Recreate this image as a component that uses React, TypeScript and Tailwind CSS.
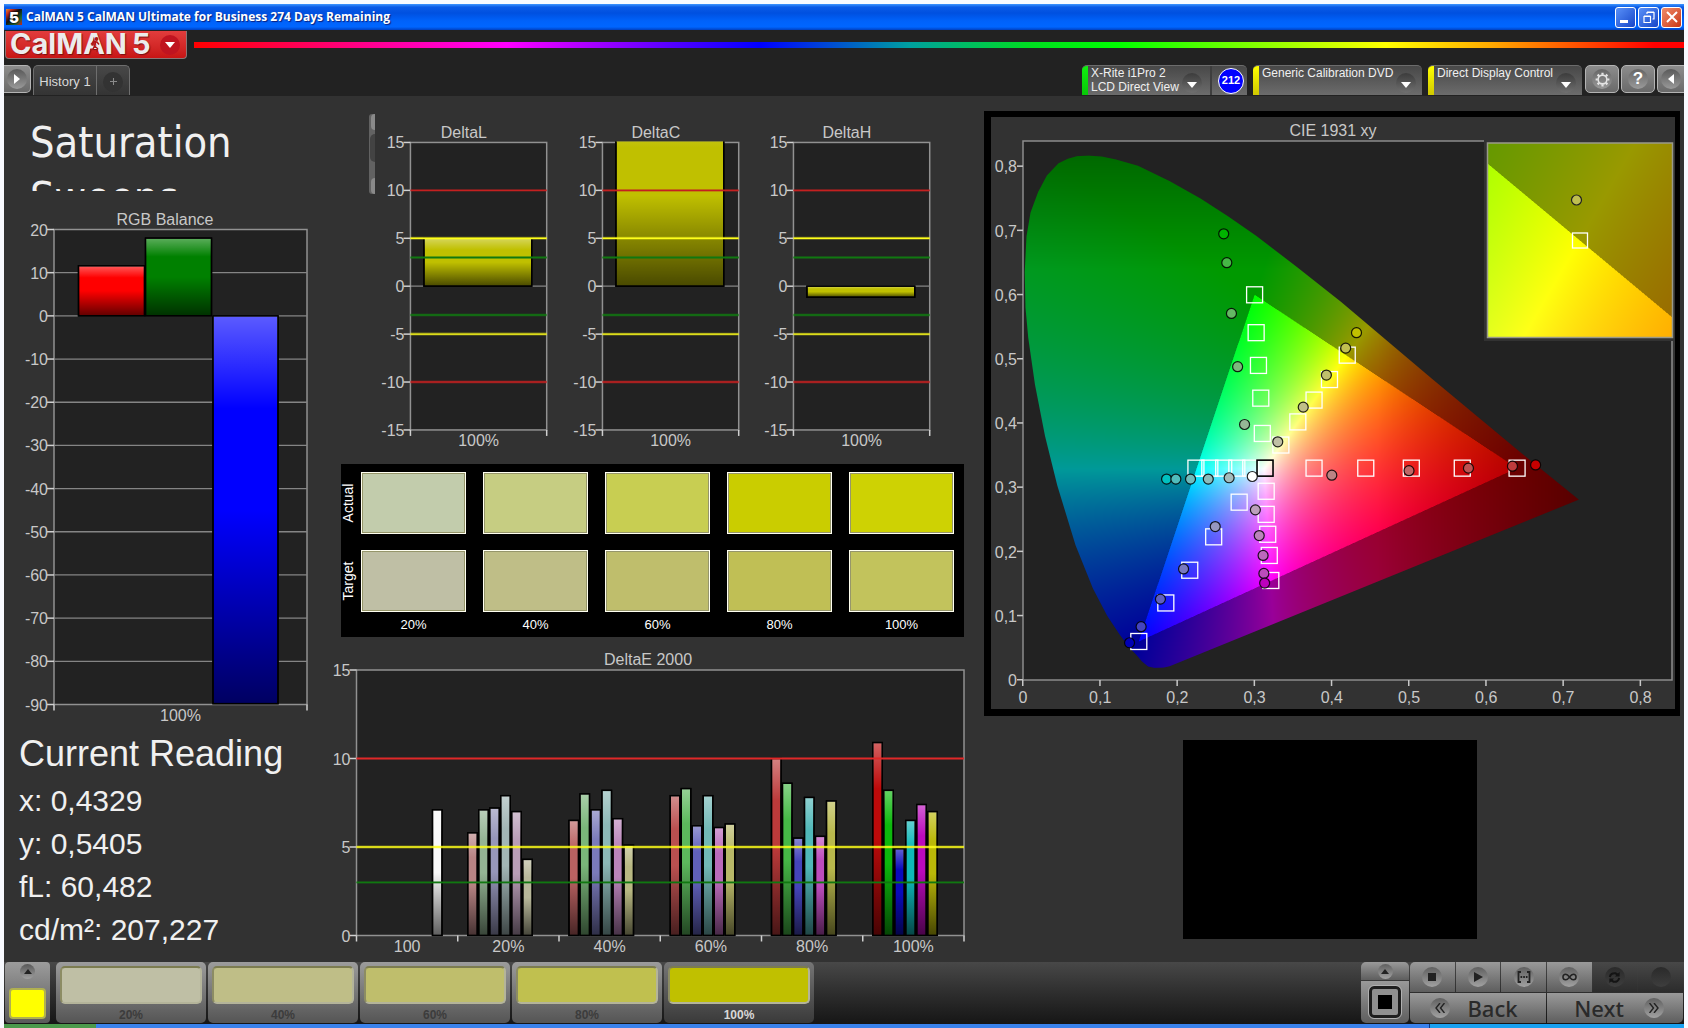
import { useEffect, useRef } from "react";
import type { ReactNode } from "react";

type Point = { x: number; y: number; fill?: string };
type Bar = { x: number; width: number; value: number; color: string };
type Limit = { value: number; color: string };
type Plot = { left: number; right: number; top: number; bottom: number };

const DELTA_LIMITS: Limit[] = [
  { value: 10, color: "#c42020" },
  { value: 5, color: "#ffff1a" },
  { value: 3, color: "#107810" },
  { value: -3, color: "#107810" },
  { value: -5, color: "#ffff1a" },
  { value: -10, color: "#c42020" },
];

const DELTA_CHARTS = [
  { title: "DeltaL", value: 5 },
  { title: "DeltaC", value: 19 },
  { title: "DeltaH", value: -1.15 },
];

const SWATCHES = [
  { label: "20%", actual: "#c2ccac", target: "#bfbfa5" },
  { label: "40%", actual: "#c6cd82", target: "#bfbe87" },
  { label: "60%", actual: "#c8ce52", target: "#bfbe6c" },
  { label: "80%", actual: "#cacd00", target: "#c0bf55" },
  { label: "100%", actual: "#ced203", target: "#c2c35c" },
];

const STEPS = [
  { label: "20%", color: "#bfbfa5" },
  { label: "40%", color: "#bfbe87" },
  { label: "60%", color: "#bfbe6c" },
  { label: "80%", color: "#c0c04f" },
  { label: "100%", color: "#c0c000" },
];

const READINGS = ["x: 0,4329", "y: 0,5405", "fL: 60,482", "cd/m²: 207,227"];

// seven slots per group: R G B C M Y W
const DELTA_E = [
  {
    label: "100",
    values: [0, 0, 0, 0, 0, 0, 7.1],
    colors: ["", "", "", "", "", "", "#f8f8f8"],
  },
  {
    label: "20%",
    values: [5.8, 7.1, 7.2, 7.9, 7, 4.3],
    colors: ["#b88484", "#94b494", "#9696ba", "#a2b6b6", "#b89cb6", "#b8b89a"],
  },
  {
    label: "40%",
    values: [6.5, 8, 7.1, 8.2, 6.6, 5.1],
    colors: ["#ba6262", "#7ab67a", "#7a7aba", "#8cb8b6", "#ba84ba", "#b8b882"],
  },
  {
    label: "60%",
    values: [7.9, 8.3, 6.2, 7.9, 6.1, 6.3],
    colors: ["#ba5050", "#5cb85c", "#6060ba", "#72b8b6", "#ba6aba", "#b8b868"],
  },
  {
    label: "80%",
    values: [10, 8.6, 5.5, 7.8, 5.6, 7.6],
    colors: ["#bc3a3a", "#46b846", "#4444ba", "#50b8b8", "#bc4cbc", "#b8b84c"],
  },
  {
    label: "100%",
    values: [10.9, 8.2, 4.9, 6.5, 7.4, 7],
    colors: ["#bc0a0a", "#0cb80c", "#0a0abc", "#0eb8b8", "#bc0abc", "#bab808"],
  },
];

const TARGETS: Point[] = [
  { x: 0.3, y: 0.6 },
  { x: 0.302, y: 0.541 },
  { x: 0.305, y: 0.49 },
  { x: 0.308, y: 0.439 },
  { x: 0.31, y: 0.384 },
  { x: 0.42, y: 0.506 },
  { x: 0.397, y: 0.468 },
  { x: 0.377, y: 0.436 },
  { x: 0.356, y: 0.402 },
  { x: 0.334, y: 0.366 },
  { x: 0.224, y: 0.33 },
  { x: 0.242, y: 0.33 },
  { x: 0.26, y: 0.33 },
  { x: 0.277, y: 0.33 },
  { x: 0.295, y: 0.33 },
  { x: 0.377, y: 0.33 },
  { x: 0.444, y: 0.33 },
  { x: 0.503, y: 0.33 },
  { x: 0.569, y: 0.33 },
  { x: 0.64, y: 0.33 },
  { x: 0.28, y: 0.277 },
  { x: 0.247, y: 0.223 },
  { x: 0.216, y: 0.171 },
  { x: 0.185, y: 0.12 },
  { x: 0.15, y: 0.06 },
  { x: 0.315, y: 0.294 },
  { x: 0.315, y: 0.258 },
  { x: 0.317, y: 0.227 },
  { x: 0.319, y: 0.194 },
  { x: 0.321, y: 0.155 },
];

const READS: Point[] = [
  { x: 0.26, y: 0.695, fill: "#00b400" },
  { x: 0.264, y: 0.65, fill: "#46b846" },
  { x: 0.27, y: 0.571, fill: "#64b864" },
  { x: 0.278, y: 0.488, fill: "#7cb87c" },
  { x: 0.287, y: 0.398, fill: "#96b896" },
  { x: 0.432, y: 0.541, fill: "#c0c000" },
  { x: 0.418, y: 0.517, fill: "#c0c050" },
  { x: 0.393, y: 0.475, fill: "#c0c06c" },
  { x: 0.363, y: 0.425, fill: "#c0c087" },
  { x: 0.33, y: 0.371, fill: "#c0c0a5" },
  { x: 0.186, y: 0.313, fill: "#00c0c0" },
  { x: 0.198, y: 0.313, fill: "#50bcbc" },
  { x: 0.217, y: 0.313, fill: "#70bcbc" },
  { x: 0.24, y: 0.313, fill: "#8cbcbc" },
  { x: 0.267, y: 0.315, fill: "#a4bcbc" },
  { x: 0.297, y: 0.317, fill: "#ffffff" },
  { x: 0.4, y: 0.319, fill: "#bc8484" },
  { x: 0.5, y: 0.326, fill: "#c06666" },
  { x: 0.577, y: 0.33, fill: "#c05050" },
  { x: 0.634, y: 0.333, fill: "#c03c3c" },
  { x: 0.664, y: 0.335, fill: "#c80000" },
  { x: 0.249, y: 0.239, fill: "#9696c0" },
  { x: 0.208, y: 0.173, fill: "#7878c0" },
  { x: 0.178, y: 0.126, fill: "#6060c0" },
  { x: 0.153, y: 0.083, fill: "#4444c0" },
  { x: 0.138, y: 0.058, fill: "#0000b4" },
  { x: 0.301, y: 0.265, fill: "#bca0bc" },
  { x: 0.306, y: 0.225, fill: "#bc84bc" },
  { x: 0.311, y: 0.194, fill: "#bc68bc" },
  { x: 0.312, y: 0.166, fill: "#bc4cbc" },
  { x: 0.313, y: 0.151, fill: "#bc00bc" },
];

// spectral locus from 640 nm round to the violet end
const LOCUS: [number, number][] = [
  [0.72, 0.281],
  [0.646, 0.353],
  [0.529, 0.47],
  [0.412, 0.589],
  [0.354, 0.644],
  [0.302, 0.692],
  [0.266, 0.722],
  [0.23, 0.75],
  [0.19, 0.777],
  [0.149, 0.801],
  [0.12, 0.811],
  [0.102, 0.8155],
  [0.085, 0.8167],
  [0.07, 0.816],
  [0.058, 0.812],
  [0.046, 0.805],
  [0.031, 0.786],
  [0.0195, 0.76],
  [0.0097, 0.728],
  [0.0045, 0.691],
  [0.0022, 0.635],
  [0.0032, 0.58],
  [0.0068, 0.533],
  [0.0155, 0.46],
  [0.0285, 0.38],
  [0.0444, 0.303],
  [0.068, 0.21],
  [0.0905, 0.1427],
  [0.109, 0.1],
  [0.125, 0.071],
  [0.138, 0.05],
  [0.147, 0.039],
  [0.154, 0.029],
  [0.162, 0.021],
  [0.17, 0.0188],
  [0.182, 0.0192],
  [0.19, 0.0215],
];

const RED = [0.64, 0.33];
const GREEN = [0.3, 0.6];
const BLUE = [0.15, 0.06];

function side(a: number[], b: number[], x: number, y: number) {
  return (b[0] - a[0]) * (y - a[1]) - (b[1] - a[1]) * (x - a[0]);
}

function chromaColor(x: number, y: number): [number, number, number] {
  const z = 1 - x - y;
  const r = Math.max(0, 3.2406 * x - 1.5372 * y - 0.4986 * z);
  const g = Math.max(0, -0.9689 * x + 1.8758 * y + 0.0415 * z);
  const b = Math.max(0, 0.0557 * x - 0.204 * y + 1.057 * z);
  const inside =
    side(RED, GREEN, x, y) >= 0 &&
    side(GREEN, BLUE, x, y) >= 0 &&
    side(BLUE, RED, x, y) >= 0;
  let level = inside ? 1 : 0.6;
  if (x > 0.46) level *= 1 - (x - 0.46) * 1.65;
  if (y > 0.64) level *= 1 - (y - 0.64) * 1.8;
  const scale = (255 * level) / Math.max(r, g, b);
  return [r * scale, g * scale, b * scale];
}

function ChromaCanvas({
  x0,
  x1,
  y0,
  y1,
  width,
  height,
  clip,
}: {
  x0: number;
  x1: number;
  y0: number;
  y1: number;
  width: number;
  height: number;
  clip?: boolean;
}) {
  const ref = useRef<HTMLCanvasElement>(null);
  const w = width * 2;
  const h = height * 2;

  useEffect(() => {
    const ctx = ref.current?.getContext("2d");
    if (!ctx) return;
    const img = ctx.createImageData(w, h);
    for (let j = 0; j < h; j++) {
      for (let i = 0; i < w; i++) {
        const x = x0 + ((i + 0.5) / w) * (x1 - x0);
        const y = y1 - ((j + 0.5) / h) * (y1 - y0);
        const [r, g, b] = chromaColor(x, y);
        const k = (j * w + i) * 4;
        img.data[k] = r;
        img.data[k + 1] = g;
        img.data[k + 2] = b;
        img.data[k + 3] = 255;
      }
    }
    ctx.putImageData(img, 0, 0);
    if (!clip) return;
    ctx.globalCompositeOperation = "destination-in";
    ctx.beginPath();
    LOCUS.forEach(([x, y]) =>
      ctx.lineTo(((x - x0) / (x1 - x0)) * w, ((y1 - y) / (y1 - y0)) * h),
    );
    ctx.closePath();
    ctx.fill();
    ctx.globalCompositeOperation = "source-over";
  }, [x0, x1, y0, y1, w, h, clip]);

  return <canvas ref={ref} width={w} height={h} className="block h-full w-full" />;
}

function BarChart({
  id,
  title,
  titleX,
  width,
  height,
  plot,
  min,
  max,
  step,
  grid,
  bars,
  limits = [],
  groups,
}: {
  id: string;
  title: string;
  titleX: number;
  width: number;
  height: number;
  plot: Plot;
  min: number;
  max: number;
  step: number;
  grid: number[];
  bars: Bar[];
  limits?: Limit[];
  groups: string[];
}) {
  const yOf = (v: number) =>
    plot.top + ((max - v) / (max - min)) * (plot.bottom - plot.top);
  const ticks: number[] = [];
  for (let v = max; v >= min; v -= step) ticks.push(v);
  const plotWidth = plot.right - plot.left;
  const groupWidth = plotWidth / groups.length;

  return (
    <svg
      viewBox={`0 0 ${width} ${height}`}
      role="img"
      aria-label={title}
      className="block w-full overflow-visible font-['Liberation_Sans',Arial,sans-serif] text-[16px]"
    >
      <defs>
        <linearGradient id={`${id}-shade`} x1="0" y1="0" x2="0" y2="1">
          <stop offset="0" stopColor="#fff" stopOpacity="0.36" />
          <stop offset="0.24" stopColor="#fff" stopOpacity="0" />
          <stop offset="0.5" stopColor="#000" stopOpacity="0" />
          <stop offset="1" stopColor="#000" stopOpacity="0.62" />
        </linearGradient>
        <clipPath id={`${id}-clip`}>
          <rect
            x={plot.left}
            y={plot.top - 1}
            width={plotWidth}
            height={plot.bottom - plot.top + 2}
          />
        </clipPath>
      </defs>
      <text x={titleX} y="17" textAnchor="middle" fill="#c8c8c8">
        {title}
      </text>
      <rect
        x={plot.left}
        y={plot.top}
        width={plotWidth}
        height={plot.bottom - plot.top}
        fill="#222"
        stroke="#919191"
        strokeWidth="1.5"
      />
      {grid.map((v) => (
        <line
          key={v}
          x1={plot.left}
          x2={plot.right}
          y1={yOf(v)}
          y2={yOf(v)}
          stroke="#858585"
          strokeWidth="1.3"
        />
      ))}
      {ticks.map((v) => (
        <g key={v}>
          <line
            x1={plot.left - 7}
            x2={plot.left}
            y1={yOf(v)}
            y2={yOf(v)}
            stroke="#d0d0d0"
            strokeWidth="1.5"
          />
          <text
            x={plot.left - 6}
            y={yOf(v) + 6}
            textAnchor="end"
            fill="#c8c8c8"
          >
            {v}
          </text>
        </g>
      ))}
      <g clipPath={`url(#${id}-clip)`}>
        {bars.map((b, i) => {
          const y = yOf(Math.max(b.value, 0));
          const h = Math.abs(yOf(b.value) - yOf(0));
          return (
            <g key={i} stroke="#000" strokeWidth="1.4">
              <rect x={b.x} y={y} width={b.width} height={h} fill={b.color} />
              <rect
                x={b.x}
                y={y}
                width={b.width}
                height={h}
                fill={`url(#${id}-shade)`}
              />
            </g>
          );
        })}
      </g>
      {limits.map((l) => (
        <g key={l.value} stroke={l.color}>
          <line
            x1={plot.left}
            x2={plot.right}
            y1={yOf(l.value)}
            y2={yOf(l.value)}
            strokeWidth="3"
            strokeOpacity="0.35"
          />
          <line
            x1={plot.left}
            x2={plot.right}
            y1={yOf(l.value)}
            y2={yOf(l.value)}
            strokeWidth="1.4"
          />
        </g>
      ))}
      {[...groups, ""].map((_, i) => (
        <line
          key={i}
          x1={plot.left + i * groupWidth}
          x2={plot.left + i * groupWidth}
          y1={plot.bottom}
          y2={plot.bottom + 6}
          stroke="#d0d0d0"
          strokeWidth="1.5"
        />
      ))}
      {groups.map((g, i) => (
        <text
          key={g}
          x={plot.left + (i + 0.5) * groupWidth}
          y={plot.bottom + 16}
          textAnchor="middle"
          fill="#c8c8c8"
        >
          {g}
        </text>
      ))}
    </svg>
  );
}

function CieChart() {
  const left = 32;
  const top = 24;
  const w = 650;
  const h = 539;
  const perX = 772;
  const perY = 642;
  const px = (x: number) => left + x * perX;
  const py = (y: number) => top + h - y * perY;
  const ticks = [0, 1, 2, 3, 4, 5, 6, 7, 8];
  const name = (t: number) => (t === 0 ? "0" : `0,${t}`);

  return (
    <svg
      viewBox="0 0 684 592"
      role="img"
      aria-label="CIE 1931 xy"
      className="block w-full font-['Liberation_Sans',Arial,sans-serif] text-[16px]"
    >
      <text x="342" y="19" textAnchor="middle" fill="#c8c8c8">
        CIE 1931 xy
      </text>
      <rect
        x={left}
        y={top}
        width={w - 1}
        height={h}
        fill="#222"
        stroke="#8c8c8c"
        strokeWidth="1.5"
      />
      {ticks.map((t) => (
        <g key={t} fill="#c8c8c8" stroke="none">
          <rect x={left - 6} y={py(t / 10) - 1} width="6" height="1.5" />
          <rect x={px(t / 10) - 1} y={top + h} width="1.5" height="6" />
          <text x={left - 6} y={py(t / 10) + 6} textAnchor="end">
            {name(t)}
          </text>
          <text x={px(t / 10)} y={top + h + 23} textAnchor="middle">
            {name(t)}
          </text>
        </g>
      ))}
      <foreignObject x={left} y={top} width={w} height={h}>
        <ChromaCanvas
          x0={0}
          x1={w / perX}
          y0={0}
          y1={h / perY}
          width={w}
          height={h}
          clip
        />
      </foreignObject>
      <g fill="none" stroke="#fff" strokeWidth="1.3">
        {TARGETS.map((p, i) => (
          <rect key={i} x={px(p.x) - 8} y={py(p.y) - 8} width="16" height="16" />
        ))}
      </g>
      <rect
        x={px(0.3135) - 8}
        y={py(0.33) - 8}
        width="16"
        height="16"
        fill="none"
        stroke="#000"
        strokeWidth="1.6"
      />
      <g stroke="#000" strokeOpacity="0.85" strokeWidth="1.2">
        {READS.map((p, i) => (
          <circle key={i} cx={px(p.x)} cy={py(p.y)} r="5" fill={p.fill} />
        ))}
      </g>
      <rect x="493" y="22" width="191" height="202" fill="#323232" />
      <foreignObject x="496" y="26" width="185" height="194">
        <ChromaCanvas
          x0={0.3913}
          x1={0.4473}
          y0={0.4773}
          y1={0.5333}
          width={185}
          height={194}
        />
      </foreignObject>
      <rect
        x="496.5"
        y="26"
        width="185"
        height="194.5"
        fill="none"
        stroke="#9a9a8a"
        strokeWidth="1.5"
      />
      <rect
        x="581.5"
        y="116"
        width="15"
        height="15"
        fill="none"
        stroke="#fff"
        strokeWidth="1.3"
      />
      <circle
        cx="585.5"
        cy="83"
        r="5"
        fill="#bfbf50"
        stroke="#222"
        strokeWidth="1.2"
      />
    </svg>
  );
}

function Round({ children, dim }: { children?: ReactNode; dim?: boolean }) {
  return (
    <span
      className={
        dim
          ? "flex size-5 items-center justify-center rounded-full bg-linear-to-b from-[#2a2a2a] to-[#3e3e3e] text-[#1c1c1c]"
          : "flex size-5 items-center justify-center rounded-full bg-linear-to-b from-[#606060] to-[#a2a2a2] text-[#222]"
      }
    >
      {children}
    </span>
  );
}

function DownArrow() {
  return (
    <span className="mt-1 flex size-5 shrink-0 items-center justify-center rounded-full bg-linear-to-b from-[#3c3c3c] to-[#707070]">
      <svg viewBox="0 0 10 6" className="mt-1 h-[6px] w-[10px]" fill="#fff">
        <path d="M0 0h10L5 6z" />
      </svg>
    </span>
  );
}

function TitleBar() {
  return (
    <div className="flex h-[26px] items-center bg-[linear-gradient(#3d95ff_0%,#0a5ae6_12%,#0050e0_35%,#0062fa_65%,#0066ff_88%,#0040c0_100%)] pr-[2px] pl-[2px]">
      <span className="flex size-4 items-center justify-center bg-[linear-gradient(135deg,#e08a30,#c02a1c_20%,#111_45%,#1a6a30_75%,#d01c20)] font-['Inter',sans-serif] text-[15px] leading-none font-black text-white [text-shadow:0_0_2px_#000,0_0_2px_#000]">
        5
      </span>
      <h1 className="ml-1 flex-1 font-['Open_Sans','Noto_Sans',sans-serif] text-[12px] font-bold whitespace-nowrap text-white [text-shadow:1px_1px_1px_#0a1f7a]">
        CalMAN 5 CalMAN Ultimate for Business 274 Days Remaining
      </h1>
      <div className="flex gap-[2px]">
        <button
          aria-label="Minimize"
          className="flex size-[21px] items-end rounded-[3px] border border-white bg-linear-to-br from-[#5a90f8] to-[#1844c8] pb-1 pl-1"
        >
          <span className="h-[3px] w-2 bg-white" />
        </button>
        <button
          aria-label="Restore"
          className="flex size-[21px] items-center justify-center rounded-[3px] border border-white bg-linear-to-br from-[#5a90f8] to-[#1844c8]"
        >
          <svg viewBox="0 0 12 12" className="size-3" fill="none" stroke="#fff">
            <path d="M1 5.5h6.5v6H1zM1 5h6.5M4 3V1.5h7V8H9.5M4 1h7" strokeWidth="1.2" />
          </svg>
        </button>
        <button
          aria-label="Close"
          className="flex size-[21px] items-center justify-center rounded-[3px] border border-white bg-linear-to-br from-[#f08a68] to-[#c83410]"
        >
          <svg viewBox="0 0 12 12" className="size-3" stroke="#fff" strokeWidth="2">
            <path d="M1 1l10 10M11 1L1 11" />
          </svg>
        </button>
      </div>
    </div>
  );
}

function DeviceTab({
  lines,
  green,
  className,
  children,
}: {
  lines: string[];
  green?: boolean;
  className: string;
  children?: ReactNode;
}) {
  return (
    <div
      className={`flex h-[30px] overflow-hidden rounded-t-[5px] border-t border-[#6c6c6c] bg-linear-to-b from-[#484848] to-[#6c6c6c] ${className}`}
    >
      <span
        className={
          green
            ? "mr-[3px] w-[6px] bg-linear-to-b from-[#10f010] to-[#08c808]"
            : "mr-[3px] w-[6px] bg-linear-to-b from-[#ffff00] to-[#d0c800]"
        }
      />
      <button
        className={
          green
            ? "flex flex-1 items-center justify-between pr-2 text-left"
            : "flex flex-1 items-center justify-between pr-[6px] text-left"
        }
      >
        <span className="self-start text-[12px] leading-[14px] whitespace-nowrap text-[#f0f0f0]">
          {lines.map((l) => (
            <span key={l} className="block">
              {l}
            </span>
          ))}
        </span>
        <DownArrow />
      </button>
      {children}
    </div>
  );
}

function Header() {
  const square =
    "flex h-7 items-center justify-center rounded-[5px] border border-[#b4b4b4] bg-linear-to-b from-[#8c8c8c] to-[#6a6a6a]";
  return (
    <header className="bg-[#222] pt-px">
      <div className="flex h-7 items-start">
        <button
          aria-label="CalMAN 5 menu"
          className="ml-px flex h-7 w-[182px] items-center justify-between overflow-hidden rounded-b-[4px] border border-t-0 border-[#8c7474] bg-linear-to-b from-[#e23c3c] to-[#c81414] pr-[6px] pb-[2px] pl-1"
        >
          <span className="relative flex gap-[5px] font-['Inter',sans-serif] text-[29px] leading-none font-bold whitespace-nowrap text-[#ececec] [text-shadow:1px_1px_1px_#7a1010]">
            <span>CalMAN</span>
            <span>5</span>
            <svg
              viewBox="0 0 12 16"
              className="absolute top-[8px] left-[79px] h-4 w-3"
              fill="none"
              stroke="#b01818"
              strokeWidth="1.5"
            >
              <circle cx="7.5" cy="2" r="1.2" fill="#b01818" />
              <path d="M7 4.5L5.5 9l3 2.5L8 15M5.5 9L4 12l-3 .5M2 7.5l2.5-3L8 5l2 2.5" />
            </svg>
          </span>
          <span className="mt-[2px] flex size-5 items-center justify-center rounded-full bg-[#c01420]">
            <svg viewBox="0 0 10 6" className="h-[6px] w-[10px]" fill="#fff">
              <path d="M0 0h10L5 6z" />
            </svg>
          </span>
        </button>
        <div className="mt-[11px] ml-[7px] h-[6px] flex-1 bg-[linear-gradient(90deg,#f00_0%,#f0a_14%,#f0f_21%,#50f_32%,#00f_38%,#00a0a0_48%,#0d2_56%,#0f0_62%,#ff0_80%,#fa0_87%,#f00_98%)]" />
      </div>
      <div className="flex h-[37px] items-start pt-[6px]">
        <button
          aria-label="Expand"
          className="flex h-7 w-[27px] items-center justify-center rounded-r-[5px] border border-l-0 border-[#b4b4b4] bg-linear-to-b from-[#8c8c8c] to-[#6a6a6a]"
        >
          <span className="flex size-5 items-center justify-center rounded-full bg-linear-to-b from-[#5a5a5a] to-[#9a9a9a]">
            <svg viewBox="0 0 6 10" className="h-[10px] w-[6px]" fill="#fff">
              <path d="M0 0v10l6-5z" />
            </svg>
          </span>
        </button>
        <div className="ml-[2px] flex h-[30px] w-[97px] rounded-t-[5px] border border-b-0 border-[#6e6e6e] bg-linear-to-b from-[#484848] to-[#343434]">
          <button className="flex-1 border-r border-[#6e6e6e] pt-[2px] text-[13px] text-[#d8d8d8]">
            History 1
          </button>
          <button
            aria-label="Add history"
            className="flex w-8 items-center justify-center pt-[2px]"
          >
            <span className="flex size-5 items-center justify-center rounded-full bg-[#333]">
              <svg viewBox="0 0 8 8" className="size-[7px]" stroke="#8a8a8a">
                <path d="M4 0v8M0 4h8" strokeWidth="1.2" />
              </svg>
            </span>
          </button>
        </div>
        <div className="ml-auto flex gap-[6px]">
          <DeviceTab
            lines={["X-Rite i1Pro 2", "LCD Direct View"]}
            green
            className="w-[165px]"
          >
            <div className="flex w-[37px] items-center justify-center border-l-2 border-[#3e3e3e] pl-[3px]">
              <span className="flex size-[26px] items-center justify-center rounded-full border border-white bg-[#0000ff] text-[11px] font-bold text-white">
                212
              </span>
            </div>
          </DeviceTab>
          <DeviceTab lines={["Generic Calibration DVD"]} className="w-[169px]" />
          <DeviceTab lines={["Direct Display Control"]} className="w-[154px]" />
        </div>
        <div className="ml-[3px] flex gap-[2px]">
          <button aria-label="Settings" className={`w-[34px] ${square}`}>
            <span className="flex size-5 items-center justify-center rounded-full bg-linear-to-b from-[#666] to-[#9a9a9a]">
              <svg
                viewBox="0 0 24 24"
                className="size-[15px]"
                fill="none"
                stroke="#e4e4e4"
                strokeWidth="2.5"
              >
                <circle cx="12" cy="12" r="7" />
                <path
                  d="M12 1v3.5M12 19.5V23M1 12h3.5M19.5 12H23M4.2 4.2l2.5 2.5M17.3 17.3l2.5 2.5M4.2 19.8l2.5-2.5M17.3 6.7l2.5-2.5"
                  strokeWidth="3.5"
                />
              </svg>
            </span>
          </button>
          <button aria-label="Help" className={`w-[34px] ${square}`}>
            <span className="flex size-5 items-center justify-center rounded-full bg-linear-to-b from-[#666] to-[#9a9a9a] text-[17px] font-bold text-white">
              ?
            </span>
          </button>
          <button
            aria-label="Collapse"
            className="flex h-7 w-[27px] items-center justify-center rounded-l-[5px] border border-r-0 border-[#b4b4b4] bg-linear-to-b from-[#8c8c8c] to-[#6a6a6a]"
          >
            <span className="flex size-5 items-center justify-center rounded-full bg-linear-to-b from-[#5a5a5a] to-[#9a9a9a]">
              <svg viewBox="0 0 6 10" className="h-[10px] w-[6px]" fill="#fff">
                <path d="M6 0v10L0 5z" />
              </svg>
            </span>
          </button>
        </div>
      </div>
    </header>
  );
}

function LeftColumn() {
  return (
    <section>
      <h2 className="mt-[19px] h-[76px] overflow-hidden pl-[26px] font-['DejaVu_Sans_Condensed','DejaVu_Sans',sans-serif] text-[43px] leading-[55px] text-[#f0f0f0]">
        Saturation
        <br />
        Sweeps
      </h2>
      <div className="mt-[17px]">
        <BarChart
          id="rgb"
          title="RGB Balance"
          titleX={161}
          width={337}
          height={516}
          plot={{ left: 50, right: 303, top: 21.5, bottom: 496.5 }}
          min={-90}
          max={20}
          step={10}
          grid={[10, 0, -10, -20, -30, -40, -50, -60, -70, -80]}
          bars={[
            { x: 74.5, width: 66, value: 11.6, color: "#ff0000" },
            { x: 141.5, width: 66, value: 18, color: "#008000" },
            { x: 209, width: 65, value: -89.8, color: "#0000ff" },
          ]}
          groups={["100%"]}
        />
      </div>
      <div className="pt-2 pl-[15px] text-[#f0f0f0]">
        <h3 className="mb-1 text-[36px] leading-[43px]">Current Reading</h3>
        {READINGS.map((r) => (
          <p key={r} className="text-[30px] leading-[43px]">
            {r}
          </p>
        ))}
      </div>
    </section>
  );
}

function SwatchTable() {
  const rows = [
    { name: "Actual", key: "actual" as const },
    { name: "Target", key: "target" as const },
  ];
  return (
    <div className="mt-[14px] h-[173px] bg-black pt-2 pr-[10px] text-white">
      {rows.map((row) => (
        <div key={row.key} className="mb-4 flex h-[62px] items-center">
          <div className="flex h-full w-5 items-center justify-center pr-[5px]">
            <span className="-rotate-90 text-[14px] leading-none">{row.name}</span>
          </div>
          <div className="grid h-full flex-1 grid-cols-5 gap-[17px]">
            {SWATCHES.map((s) => (
              <div
                key={s.label}
                className="border border-[#fffff0] outline-1 -outline-offset-2 outline-[#96966a]"
                style={{ backgroundColor: s[row.key] }}
              />
            ))}
          </div>
        </div>
      ))}
      <div className="-mt-3 ml-5 grid grid-cols-5 gap-[17px] text-center text-[13px] leading-[18px]">
        {SWATCHES.map((s) => (
          <span key={s.label}>{s.label}</span>
        ))}
      </div>
    </div>
  );
}

function MiddleColumn() {
  const plot = { left: 15.5, right: 623, top: 22, bottom: 287.5 };
  const group = (plot.right - plot.left) / DELTA_E.length;
  const bars = DELTA_E.flatMap((g, i) =>
    g.values
      .map((value, j) => ({
        x: plot.left + i * group + 10 + j * 11,
        width: 9.5,
        value,
        color: g.colors[j],
      }))
      .filter((b) => b.value > 0),
  );
  return (
    <section className="pr-5">
      <div className="flex pt-[18px] pl-7">
        <div className="flex h-20 w-[6px] flex-col items-end justify-between rounded-l-[3px] bg-[#626262]">
          <span className="h-4 w-1 rounded-l-full bg-[#8a8a8a]" />
          <span className="mb-3 h-7 w-[5px] rounded-l-full bg-[#434343]" />
          <span className="h-4 w-1 rounded-l-full bg-[#8a8a8a]" />
        </div>
        <div className="-mr-2 ml-[2px] grid flex-1 grid-cols-3 pt-[7px] pr-5">
          {DELTA_CHARTS.map((c) => (
            <BarChart
              key={c.title}
              id={c.title}
              title={c.title}
              titleX={87}
              width={192}
              height={330}
              plot={{ left: 33.5, right: 170, top: 21.5, bottom: 309.5 }}
              min={-15}
              max={15}
              step={5}
              grid={[0]}
              bars={[{ x: 47, width: 108, value: c.value, color: "#c0c000" }]}
              limits={DELTA_LIMITS}
              groups={["100%"]}
            />
          ))}
        </div>
      </div>
      <SwatchTable />
      <div className="mt-[11px]">
        <BarChart
          id="de2000"
          title="DeltaE 2000"
          titleX={307}
          width={623}
          height={308}
          plot={plot}
          min={0}
          max={15}
          step={5}
          grid={[]}
          bars={bars}
          limits={[
            { value: 10, color: "#e02828" },
            { value: 5, color: "#ffff1a" },
            { value: 3, color: "#107810" },
          ]}
          groups={DELTA_E.map((g) => g.label)}
        />
      </div>
    </section>
  );
}

function RightColumn() {
  return (
    <section className="pt-[15px] pr-1">
      <div className="border-t-[6px] border-r-[5px] border-b-[7px] border-l-[7px] border-black">
        <CieChart />
      </div>
      <div className="mt-6 flex justify-center pr-1">
        <div className="h-[199px] w-[294px] bg-black" />
      </div>
    </section>
  );
}

function Footer() {
  const key =
    "flex items-center justify-center bg-linear-to-b from-[#9a9a9a] to-[#5e5e5e]";
  return (
    <footer className="flex h-[62px] bg-linear-to-b from-[#484848] to-[#161616] pr-px pb-px">
      <button
        aria-label="Current color"
        className="ml-px flex w-[45px] flex-col items-center justify-between rounded-[4px] bg-linear-to-b from-[#9c9c9c] to-[#5a5a5a] pt-[2px] pb-1"
      >
        <span className="flex size-[15px] items-center justify-center rounded-full bg-linear-to-b from-[#585858] to-[#a0a0a0]">
          <svg viewBox="0 0 8 5" className="h-[5px] w-2" fill="#222">
            <path d="M0 5h8L4 0z" />
          </svg>
        </span>
        <span className="h-[31px] w-[37px] rounded-[4px] border-2 border-[#b0b050] bg-[#ffff00]" />
      </button>
      <div className="ml-[6px] flex gap-[2px]">
        {STEPS.map((s, i) => {
          const active = i === STEPS.length - 1;
          return (
            <button
              key={s.label}
              className={
                active
                  ? "flex w-[150px] flex-col items-center rounded-[5px] bg-linear-to-b from-[#767676] to-[#3a3a3a] pt-1 text-[12px] leading-[22px] font-bold text-[#d8d8d8]"
                  : "flex w-[150px] flex-col items-center rounded-[5px] bg-linear-to-b from-[#9c9c9c] to-[#555] pt-1 text-[12px] leading-[22px] font-bold text-[#3c3c3c]"
              }
            >
              <span
                className="h-[38px] w-[142px] shrink-0 rounded-[5px] border-2 border-t-[#7c7c50] border-r-[#b4b49a] border-b-[#b4b49a] border-l-[#8c8c64]"
                style={{ backgroundColor: s.color }}
              />
              {s.label}
            </button>
          );
        })}
      </div>
      <div className="ml-auto flex gap-px">
        <div className="flex w-12 flex-col gap-px">
          <button aria-label="Show patterns" className={`h-[18px] rounded-t-[5px] ${key}`}>
            <span className="flex size-[15px] items-center justify-center rounded-full bg-linear-to-b from-[#606060] to-[#a2a2a2]">
              <svg viewBox="0 0 8 5" className="h-[5px] w-2" fill="#222">
                <path d="M0 5h8L4 0z" />
              </svg>
            </span>
          </button>
          <button aria-label="Pattern" className={`flex-1 rounded-b-[5px] ${key}`}>
            <span className="flex size-8 items-center justify-center rounded-[5px] border-[3px] border-[#1e1e1e] bg-[#909090] outline-1 outline-[#b0b0b0]">
              <span className="size-[14px] bg-black" />
            </span>
          </button>
        </div>
        <div className="grid w-[273px] grid-cols-6 grid-rows-[30px_30px] gap-px">
          <button aria-label="Stop" className={`rounded-tl-[5px] ${key}`}>
            <Round>
              <span className="size-2 bg-[#222]" />
            </Round>
          </button>
          <button aria-label="Read" className={key}>
            <Round>
              <svg viewBox="0 0 9 10" className="ml-px h-[10px] w-[9px]" fill="currentColor">
                <path d="M0 0v10l9-5z" />
              </svg>
            </Round>
          </button>
          <button aria-label="Read series" className={key}>
            <Round>
              <svg
                viewBox="0 0 14 12"
                className="h-3 w-[14px]"
                fill="none"
                stroke="currentColor"
                strokeWidth="1.8"
              >
                <path d="M4 1H1.5v10H4M10 1h2.5v10H10" />
                <path d="M3.5 6h7" strokeDasharray="1.7 1" />
              </svg>
            </Round>
          </button>
          <button aria-label="Read continuously" className={key}>
            <Round>
              <svg
                viewBox="0 0 16 8"
                className="h-2 w-[15px]"
                fill="none"
                stroke="currentColor"
                strokeWidth="1.6"
              >
                <path d="M8 4C6.5 2 5.5 1 4 1a3 3 0 0 0 0 6c1.5 0 2.5-1 4-3s2.5-3 4-3a3 3 0 0 1 0 6c-1.5 0-2.5-1-4-3z" />
              </svg>
            </Round>
          </button>
          <button
            aria-label="Refresh"
            className="flex items-center justify-center bg-linear-to-b from-[#484848] to-[#2c2c2c]"
          >
            <Round dim>
              <svg
                viewBox="0 0 14 14"
                className="size-[13px]"
                fill="none"
                stroke="#141414"
                strokeWidth="2.2"
              >
                <path d="M2 6.5C2.5 3.5 5 2 8 2.5l2.5 1.5M12 7.5C11.5 10.5 9 12 6 11.5L3.5 10" />
                <path d="M12.5 1v5h-5zM1.5 13V8h5z" fill="#141414" stroke="none" />
              </svg>
            </Round>
          </button>
          <button
            aria-label="Record"
            className="flex items-center justify-center rounded-tr-[5px] bg-linear-to-b from-[#484848] to-[#2c2c2c]"
          >
            <Round dim />
          </button>
          <button
            className={`col-span-3 gap-[17px] rounded-bl-[5px] pr-2 font-['Noto_Sans','Open_Sans',sans-serif] text-[22px] leading-none font-medium text-[#2a2a2a] ${key}`}
          >
            <Round>
              <svg viewBox="0 0 10 10" className="size-[10px]" fill="none" stroke="currentColor" strokeWidth="1.4">
                <path d="M5 0L1 5l4 5M9.500 0l-4 5 4 5" />
              </svg>
            </Round>
            Back
          </button>
          <button
            className={`col-span-3 gap-[20px] rounded-br-[5px] pl-2 font-['Noto_Sans','Open_Sans',sans-serif] text-[22px] leading-none font-medium text-[#2a2a2a] ${key}`}
          >
            Next
            <Round>
              <svg viewBox="0 0 10 10" className="size-[10px]" fill="none" stroke="currentColor" strokeWidth="1.4">
                <path d="M.5 0l4 5-4 5M5 0l4 5-4 5" />
              </svg>
            </Round>
          </button>
        </div>
      </div>
    </footer>
  );
}

export default function App() {
  return (
    <div className="flex min-h-screen flex-col bg-[#f8faff] px-1 pt-1 font-['Liberation_Sans',Arial,sans-serif]">
      <TitleBar />
      <Header />
      <main className="grid flex-1 grid-cols-[337fr_643fr_700fr] items-start bg-[#323232]">
        <LeftColumn />
        <MiddleColumn />
        <RightColumn />
      </main>
      <Footer />
      <div className="flex h-1">
        <span className="w-24 rounded-tr-[3px] bg-[#4c9a4c]" />
        <span className="-ml-1 flex-1 bg-[#3a82ec]" />
        <span className="w-[255px] border-l border-[#0a3a8a] bg-[#18a0f0]" />
      </div>
    </div>
  );
}
